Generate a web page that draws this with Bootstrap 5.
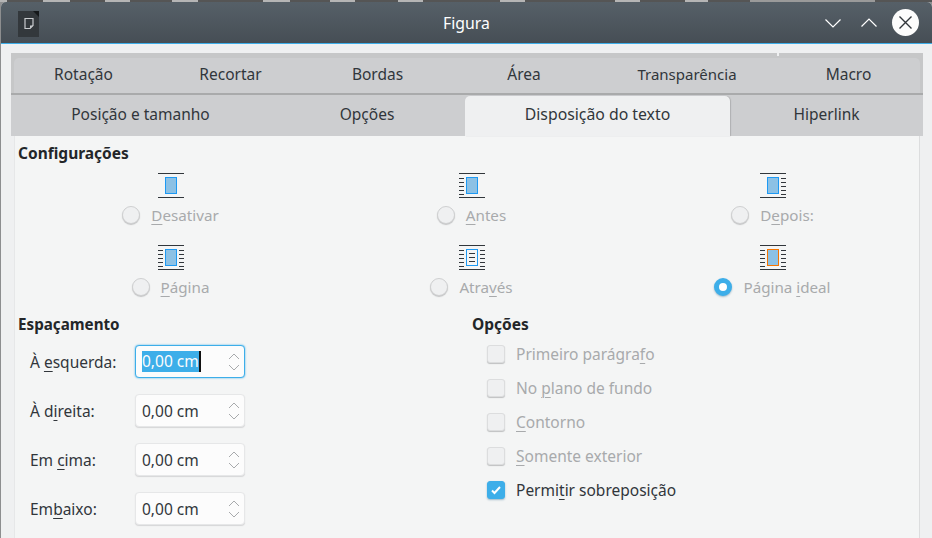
<!DOCTYPE html>
<html lang="pt-BR">
<head>
    <meta charset="UTF-8">
    <meta name="viewport" content="width=device-width, initial-scale=1.0">
    <title>Figura</title>
    <link rel="stylesheet" href="https://cdn.jsdelivr.net/npm/bootstrap@5.3.2/dist/css/bootstrap.min.css">
    <style>
        html, body { height: 100%; }
        body {
            width: 932px; height: 538px; overflow: hidden;
            background: #8d8e8f; color: #232629;
            font-family: "Noto Sans", sans-serif; font-size: 15.5px; line-height: 20px;
        }
        u { text-underline-offset: 3px; text-decoration-thickness: 1px; }
        /* bits of the text behind the window, at the very top */
        .dlg-behind {
            height: 2px;
            background: linear-gradient(90deg, #b5b5b5 7px, #555 7px 43px, #b5b5b5 43px 70px, #555 70px 105px, #b5b5b5 105px 130px, #555 130px 172px, #b5b5b5 172px 198px, #555 198px 263px, #b5b5b5 263px 290px, #555 290px 330px, #b5b5b5 330px 355px, #555 355px 398px, #b5b5b5 398px 423px, #555 423px 500px, #b5b5b5 500px 525px, #555 525px 615px, #b5b5b5 615px 640px, #555 640px 685px, #b5b5b5 685px 708px, #555 708px 750px, #9a9a9a 750px 875px, #555 875px);
        }
        .dlg-window {
            margin-left: 1px; height: 536px;
            background: #eff0f1; border-radius: 5px 5px 0 0; overflow: hidden;
        }
        .dlg-title {
            height: 42px; padding: 0 13px 0 17px;
            background: linear-gradient(#566068, #464e55);
            border-bottom: 1px solid #3daee9; color: #fff; position: relative;
        }
        .dlg-title-text { position: absolute; left: 0; right: 0; text-align: center; top: 11px; font-size: 15.8px; }
        .dlg-appicon { width: 21px; height: 26px; margin-top: 3px; background: #33383c; position: relative; }
        .dlg-appicon::after {
            content: ""; position: absolute; top: 0; right: 0;
            border-top: 6px solid #15181a; border-left: 6px solid transparent;
        }
        .dlg-ctrls { gap: 20px; }
        .dlg-close { width: 27px; height: 27px; margin-left: -5px; border-radius: 50%; background: #fcfcfc; }
        .dlg-tabs { margin: 9px 9px 0 10px; background: #c6c7c8; }
        .tab-row { display: flex; }
        .row-top-wrap { height: 42px; border-bottom: 2px solid #a9aaab; padding: 5px 3px 0; }
        .row-top-wrap .tab-row { height: 35px; background: #cdced0; border-radius: 5px 5px 0 0; }
        .tab-row.row-bot { height: 41px; background: #cdced0; }
        .tab-item { display: flex; align-items: center; justify-content: center; color: #31363b; padding-bottom: 3px; }
        .tab-row.row-bot .tab-item { padding-bottom: 4px; }
        .tab-row.row-bot .tab-item.is-on {
            background: #eff0f1; border-radius: 5px 5px 0 0; margin-top: 1px; padding-bottom: 5px;
            box-shadow: 1px 0 1px #b0b1b2; font-size: 15.8px;
        }
        .tab-notched { position: relative; }
        .tab-notched::before {
            content: ""; position: absolute; left: 0; top: -5px; width: 2px; height: 3px;
            background: #eff0f1;
        }
        .tab-narrow { font-size: 15px; }
        .tab-w143 { width: 143px; padding-right: 4px; } .tab-w147 { width: 147px; } .tab-w146 { width: 146px; } .tab-w180 { width: 180px; }
        .tab-w261 { width: 261px; padding-right: 2px; } .tab-w193 { width: 193px; padding-right: 3px; } .tab-w265 { width: 265px; }
        .dlg-panel {
            margin: 0 12px 0 13px; height: 403px; background: #f4f5f5; padding: 7px 4px 8px 3px;
            border-left: 1px solid #e6e7e8; border-right: 1px solid #dcddde;
        }
        .group-title { font-weight: 700; color: #232629; line-height: 20px; }
        .wrap-grid { display: grid; grid-template-columns: repeat(3, 301px); margin: 10px 0 0 2px; row-gap: 19px; }
        .wrap-opt { display: flex; flex-direction: column; align-items: center; }
        .wrap-opt svg { display: block; margin-bottom: 6px; }
        .wrap-line { height: 22px; color: #a8aaac; gap: 11px; font-size: 15.2px; }
        .dlg-radio {
            width: 18px; height: 18px; margin: 0; border: 1px solid #cfd0d1; border-radius: 50%;
            background: #eff0f1; box-shadow: 0 1px 1px #c3c4c5; flex: none;
        }
        .dlg-radio.is-on { background: #fff; border: 5px solid #3daee9; box-shadow: 0 1px 2px #9fb9c8; }
        .lower-cols { margin-top: 16px; }
        .col-spacing { width: 454px; flex: none; }
        .col-spacing .group-title { font-size: 15.2px; }
        .spin-row { height: 33px; margin-top: 16px; padding-left: 12px; color: #31363b; }
        .group-title + .spin-row { margin-top: 11px; }
        .spin-label { width: 105px; flex: none; }
        .spin-box {
            width: 110px; height: 33px; padding: 0 4px 0 6px; background: #fcfcfc;
            border: 1px solid #e6e7e8; border-radius: 4px; box-shadow: 0 1px 1px #d5d6d7;
        }
        .spin-box.is-focus { border-color: #3daee9; box-shadow: 0 0 2px #3daee9; }
        .spin-sel { background: #3daee9; color: #fcfcfc; border-right: 2px solid #111; line-height: 21px; }
        .spin-arrows { margin-left: auto; gap: 4px; }
        .spin-arrows svg { display: block; }
        .check-row { height: 34px; padding-left: 15px; gap: 11px; color: #a8aaac; }
        .group-title + .check-row { margin-top: 3px; }
        .check-row.is-live { color: #31363b; }
        .dlg-check {
            width: 18px; height: 18px; flex: none; background: #eff0f1;
            border: 1px solid #dcddde; border-radius: 3px; box-shadow: 0 1px 1px #bfc0c1;
        }
        .dlg-check.is-on { background: #3daee9; border-color: #3daee9; box-shadow: 0 1px 2px #9fb9c8; }
    </style>
</head>
<body>
    <div class="dlg-behind"></div>
    <div class="dlg-window">
        <div class="dlg-title d-flex align-items-center justify-content-between">
            <div class="dlg-appicon d-flex align-items-center justify-content-center">
                <svg width="12" height="14" viewBox="0 0 12 14"><path d="M2 1.5h8v7l-3 3H2z" fill="none" stroke="#c9cccf" stroke-width="1.2"/><path d="M7 11.5v-3h3z" fill="#c9cccf"/></svg>
            </div>
            <div class="dlg-title-text">Figura</div>
            <div class="dlg-ctrls d-flex align-items-center">
                <svg width="16" height="10" viewBox="0 0 16 10"><path d="M.5 1.5l7.5 7.5 7.5-7.5" fill="none" stroke="#fff" stroke-width="1.2"/></svg>
                <svg width="16" height="10" viewBox="0 0 16 10"><path d="M.5 8.5L8 1l7.5 7.5" fill="none" stroke="#fff" stroke-width="1.2"/></svg>
                <div class="dlg-close d-flex align-items-center justify-content-center">
                    <svg width="15" height="15" viewBox="0 0 15 15"><path d="M1.5 1.5l12 12M13.5 1.5l-12 12" stroke="#31363b" stroke-width="1.4"/></svg>
                </div>
            </div>
        </div>

        <div class="dlg-tabs">
            <div class="row-top-wrap">
                <div class="tab-row">
                    <div class="tab-item tab-w143">Rotação</div>
                    <div class="tab-item tab-w147">Recortar</div>
                    <div class="tab-item tab-w147">Bordas</div>
                    <div class="tab-item tab-w146">Área</div>
                    <div class="tab-item tab-w180 tab-narrow">Transparência</div>
                    <div class="tab-item tab-notched flex-fill">Macro</div>
                </div>
            </div>
            <div class="tab-row row-bot">
                <div class="tab-item tab-w261">Posição e tamanho</div>
                <div class="tab-item tab-w193">Opções</div>
                <div class="tab-item tab-w265 is-on">Disposição do texto</div>
                <div class="tab-item flex-fill">Hiperlink</div>
            </div>
        </div>

        <div class="dlg-panel">
            <div class="group-title">Configurações</div>
            <div class="wrap-grid">
                <div class="wrap-opt">
                    <svg width="26" height="25" viewBox="0 0 26 25"><use href="#ic-rules"/><rect x="7.5" y="4.5" width="11" height="16" fill="#8cc1e5" stroke="#1d99f3"/></svg>
                    <div class="wrap-line d-flex align-items-center"><span class="dlg-radio"></span><span><u>D</u>esativar</span></div>
                </div>
                <div class="wrap-opt">
                    <svg width="26" height="25" viewBox="0 0 26 25"><use href="#ic-rules"/><use href="#ic-left"/><rect x="7.5" y="4.5" width="11" height="16" fill="#8cc1e5" stroke="#1d99f3"/></svg>
                    <div class="wrap-line d-flex align-items-center"><span class="dlg-radio"></span><span><u>A</u>ntes</span></div>
                </div>
                <div class="wrap-opt">
                    <svg width="26" height="25" viewBox="0 0 26 25"><use href="#ic-rules"/><use href="#ic-right"/><rect x="7.5" y="4.5" width="11" height="16" fill="#8cc1e5" stroke="#1d99f3"/></svg>
                    <div class="wrap-line d-flex align-items-center"><span class="dlg-radio"></span><span>D<u>e</u>pois:</span></div>
                </div>
                <div class="wrap-opt">
                    <svg width="26" height="25" viewBox="0 0 26 25"><use href="#ic-rules"/><use href="#ic-left"/><use href="#ic-right"/><rect x="7.5" y="4.5" width="11" height="16" fill="#8cc1e5" stroke="#1d99f3"/></svg>
                    <div class="wrap-line d-flex align-items-center"><span class="dlg-radio"></span><span><u>P</u>ágina</span></div>
                </div>
                <div class="wrap-opt">
                    <svg width="26" height="25" viewBox="0 0 26 25"><use href="#ic-rules"/><use href="#ic-left"/><use href="#ic-right"/><rect x="7.5" y="4.5" width="11" height="16" fill="#f4f5f5" stroke="#1d99f3"/><path d="M10 8.5h6M10 12.5h6M10 16.5h6" stroke="#31363b"/></svg>
                    <div class="wrap-line d-flex align-items-center"><span class="dlg-radio"></span><span>Atra<u>v</u>és</span></div>
                </div>
                <div class="wrap-opt">
                    <svg width="26" height="25" viewBox="0 0 26 25"><use href="#ic-rules"/><use href="#ic-left"/><use href="#ic-right"/><rect x="7.5" y="4.5" width="11" height="16" fill="#8cc1e5" stroke="#f67400"/></svg>
                    <div class="wrap-line d-flex align-items-center"><span class="dlg-radio is-on"></span><span>Página <u>i</u>deal</span></div>
                </div>
            </div>

            <div class="lower-cols d-flex">
                <div class="col-spacing">
                    <div class="group-title">Espaçamento</div>
                    <div class="spin-row d-flex align-items-center">
                        <span class="spin-label">À <u>e</u>squerda:</span>
                        <div class="spin-box is-focus d-flex align-items-center"><span class="spin-sel">0,00 cm</span><span class="spin-arrows d-flex flex-column"><svg width="12" height="7" viewBox="0 0 12 7"><use href="#ic-up"/></svg><svg width="12" height="7" viewBox="0 0 12 7"><use href="#ic-down"/></svg></span></div>
                    </div>
                    <div class="spin-row d-flex align-items-center">
                        <span class="spin-label">À d<u>i</u>reita:</span>
                        <div class="spin-box d-flex align-items-center"><span>0,00 cm</span><span class="spin-arrows d-flex flex-column"><svg width="12" height="7" viewBox="0 0 12 7"><use href="#ic-up"/></svg><svg width="12" height="7" viewBox="0 0 12 7"><use href="#ic-down"/></svg></span></div>
                    </div>
                    <div class="spin-row d-flex align-items-center">
                        <span class="spin-label">Em <u>c</u>ima:</span>
                        <div class="spin-box d-flex align-items-center"><span>0,00 cm</span><span class="spin-arrows d-flex flex-column"><svg width="12" height="7" viewBox="0 0 12 7"><use href="#ic-up"/></svg><svg width="12" height="7" viewBox="0 0 12 7"><use href="#ic-down"/></svg></span></div>
                    </div>
                    <div class="spin-row d-flex align-items-center">
                        <span class="spin-label">Em<u>b</u>aixo:</span>
                        <div class="spin-box d-flex align-items-center"><span>0,00 cm</span><span class="spin-arrows d-flex flex-column"><svg width="12" height="7" viewBox="0 0 12 7"><use href="#ic-up"/></svg><svg width="12" height="7" viewBox="0 0 12 7"><use href="#ic-down"/></svg></span></div>
                    </div>
                </div>
                <div class="flex-fill">
                    <div class="group-title">Opções</div>
                    <div class="check-row d-flex align-items-center"><span class="dlg-check"></span><span>Primeiro parágra<u>f</u>o</span></div>
                    <div class="check-row d-flex align-items-center"><span class="dlg-check"></span><span>No <u>p</u>lano de fundo</span></div>
                    <div class="check-row d-flex align-items-center"><span class="dlg-check"></span><span><u>C</u>ontorno</span></div>
                    <div class="check-row d-flex align-items-center"><span class="dlg-check"></span><span><u>S</u>omente exterior</span></div>
                    <div class="check-row is-live d-flex align-items-center">
                        <span class="dlg-check is-on d-flex align-items-center justify-content-center"><svg width="12" height="10" viewBox="0 0 12 10"><path d="M2 5.5l2.5 2.5L10 2" fill="none" stroke="#fff" stroke-width="2"/></svg></span>
                        <span>Permi<u>t</u>ir sobreposição</span>
                    </div>
                </div>
            </div>
        </div>
    </div>

    <svg width="0" height="0" class="d-block position-absolute">
        <defs>
            <path id="ic-rules" d="M0 .5h26M0 24.5h26" stroke="#31363b"/>
            <path id="ic-left" d="M0 5.5h5M0 9.5h5M0 13.5h5M0 17.5h5M0 21.5h5" stroke="#31363b"/>
            <path id="ic-right" d="M21 5.5h5M21 9.5h5M21 13.5h5M21 17.5h5M21 21.5h5" stroke="#31363b"/>
            <path id="ic-up" d="M1 6l5-5 5 5" fill="none" stroke="#a8aaac"/>
            <path id="ic-down" d="M1 1l5 5 5-5" fill="none" stroke="#a8aaac"/>
        </defs>
    </svg>
</body>
</html>
